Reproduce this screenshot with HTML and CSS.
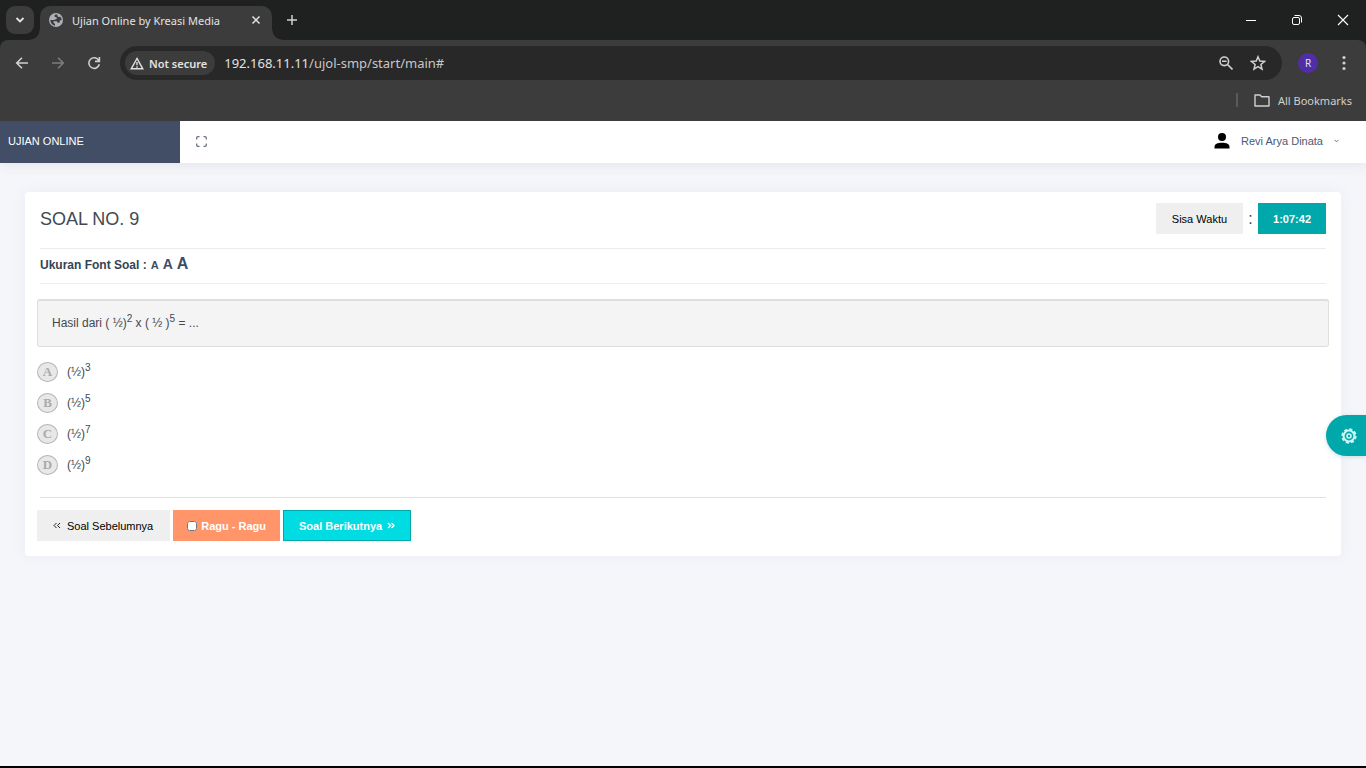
FILE: index.html
```html
<!DOCTYPE html>
<html lang="id">
<head>
<meta charset="utf-8">
<meta name="viewport" content="width=device-width, initial-scale=1">
<title>Ujian Online by Kreasi Media</title>
<link rel="stylesheet" href="styles.css">
</head>
<body>
<div class="browser">
  <div class="tabstrip">
    <button class="tab-search" aria-label="Search tabs"><svg width="10" height="8" viewBox="0 0 10 8"><path d="M1.500 2l3.500 3.500L8.500 2" fill="none" stroke="#e3e3e3" stroke-width="1.800"/></svg></button>
    <div class="tab">
      <svg width="14" height="14" viewBox="0 0 14 14"><circle cx="7" cy="7" r="7" fill="#aeb2b8"/><path d="M6.500 1.500c-1 .8-1.500 1.500-.7 2.300.9.700 2.200.2 2.100 1.500-.1 1.100-1.800.8-2.600 1.800H1.300c0 3 2 5.200 4.700 5.600V11l-1.500-1.400V8.300h3.200l1.100 1.400h1.600l.5-2c.5-.4 1.300-.5 1.800-.2 0-1.300-.5-2.700-1.400-3.700L9.500 4 8.400 2.900V1.500z" fill="#3c3c3c"/></svg>
      <span class="tab-title">Ujian Online by Kreasi Media</span>
      <button class="icon-button" aria-label="Close tab"><svg width="10" height="10" viewBox="0 0 10 10"><path d="M1.500 1.500l7 7m0-7l-7 7" stroke="#e3e3e3" stroke-width="1.500"/></svg></button>
    </div>
    <button class="icon-button new-tab" aria-label="New tab"><svg width="12" height="12" viewBox="0 0 12 12"><path d="M6 1v10M1 6h10" stroke="#d0d0d0" stroke-width="1.500"/></svg></button>
    <div class="window-controls">
      <button class="icon-button" aria-label="Minimize"><svg width="12" height="12" viewBox="0 0 12 12"><path d="M1 6.500h10" stroke="#fff"/></svg></button>
      <button class="icon-button" aria-label="Restore"><svg width="12" height="12" viewBox="0 0 12 12" fill="none" stroke="#fff"><rect x="1.500" y="3.500" width="7" height="7" rx="1.500"/><path d="M3.500 1.500H8A2.500 2.500 0 0 1 10.500 4v4.500"/></svg></button>
      <button class="icon-button" aria-label="Close"><svg width="12" height="12" viewBox="0 0 12 12"><path d="M1 1l10 10m0-10L1 11" stroke="#fff" stroke-width="1.100"/></svg></button>
    </div>
  </div>
  <div class="toolbar">
    <button class="icon-button" aria-label="Back"><svg width="14" height="14" viewBox="0 0 14 14" fill="none" stroke="#d0d0d0" stroke-width="1.600"><path d="M13 7H2m5-5.300L1.700 7 7 12.300"/></svg></button>
    <button class="icon-button" aria-label="Forward"><svg width="14" height="14" viewBox="0 0 14 14" fill="none" stroke="#7c7c7c" stroke-width="1.600"><path d="M1 7h11M7 1.700L12.300 7 7 12.300"/></svg></button>
    <button class="icon-button" aria-label="Reload"><svg width="14" height="14" viewBox="0 0 14 14" fill="none" stroke="#d0d0d0" stroke-width="1.600"><path d="M11.800 4.500A5.300 5.300 0 1 0 12.300 8.300M12.400 1v4.400H8"/></svg></button>
    <div class="omnibox">
      <button class="security"><svg width="14" height="13" viewBox="0 0 14 13" fill="none" stroke="#e0e0e0" stroke-width="1.400"><path d="M7 1.500L1.200 11.800h11.600zM7 5v3.300M7 9.300v1.400"/></svg>Not secure</button>
      <div class="url">192.168.11.11<span class="url-path">/ujol-smp/start/main#</span></div>
      <button class="icon-button" aria-label="Zoom"><svg width="14" height="14" viewBox="0 0 14 14" fill="none" stroke="#d0d0d0" stroke-width="1.600"><circle cx="5.300" cy="5.300" r="4.300"/><path d="M8.500 8.500l5 5M3 5.300h4.600"/></svg></button>
      <button class="icon-button" aria-label="Bookmark this page"><svg width="16" height="16" viewBox="0 0 16 16" fill="none" stroke="#d0d0d0" stroke-width="1.500"><path d="M8 1.800l1.800 4.300 4.700.4-3.600 3 1.100 4.600-4-2.500-4 2.500 1.100-4.600-3.600-3 4.700-.4z"/></svg></button>
    </div>
    <button class="profile" aria-label="Profile">R</button>
    <button class="icon-button" aria-label="Menu"><svg width="4" height="16" viewBox="0 0 4 16" fill="#d0d0d0"><circle cx="2" cy="2.500" r="1.600"/><circle cx="2" cy="8" r="1.600"/><circle cx="2" cy="13.500" r="1.600"/></svg></button>
  </div>
  <div class="bookmarks">
    <button class="all-bookmarks"><svg width="16" height="13" viewBox="0 0 16 13" fill="none" stroke="#d0d0d0" stroke-width="1.400"><path d="M1 1h5l1.700 1.800H15V12H1z" stroke-linejoin="round"/></svg>All Bookmarks</button>
  </div>
</div>

<div class="page">
  <header class="topbar">
    <a class="brand" href="#">UJIAN ONLINE</a>
    <button class="icon-button fullscreen" aria-label="Fullscreen"><svg width="11" height="11" viewBox="0 0 11 11" fill="none" stroke="#6b7283" stroke-width="1.300"><path d="M.7 3.500V2Q.7.700 2 .7h1.500M7.500.7H9q1.300 0 1.300 1.300v1.500M10.300 7.500V9q0 1.300-1.300 1.300H7.500M3.500 10.300H2Q.7 10.300.7 9V7.500"/></svg></button>
    <button class="user"><svg class="avatar" width="16" height="16" viewBox="0 0 16 16"><circle cx="8" cy="4" r="4"/><path d="M.5 15.500V14c0-3 3-4.300 7.500-4.300s7.500 1.300 7.500 4.300v1.500z"/></svg>Revi Arya Dinata<svg class="caret" width="5" height="4" viewBox="0 0 5 4"><path d="M.5.800l2 2 2-2" fill="none" stroke="#68718a"/></svg></button>
  </header>

  <main class="content">
    <section class="card">
      <div class="card-head">
        <h1 class="title">SOAL NO. 9</h1>
        <div class="timer"><span class="button muted">Sisa Waktu</span><span class="colon">:</span><span class="button time">1:07:42</span></div>
      </div>
      <div class="font-size">
        <span>Ukuran Font Soal :</span>
        <a class="small" href="#">A</a>
        <a class="medium" href="#">A</a>
        <a class="large" href="#">A</a>
      </div>
      <div class="question">Hasil dari ( ½)<sup>2</sup> x ( ½ )<sup>5</sup> = ...</div>
      <div class="options">
        <label class="option"><input type="radio" name="answer" value="A"><span class="letter">A</span><span>(½)<sup>3</sup></span></label>
        <label class="option"><input type="radio" name="answer" value="B"><span class="letter">B</span><span>(½)<sup>5</sup></span></label>
        <label class="option"><input type="radio" name="answer" value="C"><span class="letter">C</span><span>(½)<sup>7</sup></span></label>
        <label class="option"><input type="radio" name="answer" value="D"><span class="letter">D</span><span>(½)<sup>9</sup></span></label>
      </div>
      <div class="actions">
        <button class="button muted"><svg width="8" height="7" viewBox="0 0 8 7" fill="none" stroke="#222"><path d="M3.500 1L1 3.500 3.500 6M7 1L4.500 3.500 7 6"/></svg>Soal Sebelumnya</button>
        <label class="button doubt"><input type="checkbox">Ragu - Ragu</label>
        <button class="button next">Soal Berikutnya<svg width="8" height="7" viewBox="0 0 8 7" fill="none" stroke="#fff" stroke-width="1.400"><path d="M1 1l2.500 2.500L1 6M4.500 1L7 3.500 4.500 6"/></svg></button>
      </div>
    </section>
  </main>
  <button class="settings" aria-label="Settings"><svg width="16" height="16" viewBox="0 0 16 16" fill="none" stroke="#c9f5f5"><circle cx="8" cy="8" r="5.400" stroke-width="2"/><circle cx="8" cy="8" r="6.700" stroke-width="1.900" stroke-dasharray="3.200 2.060"/><circle cx="8" cy="8" r="2" stroke-width="1.600"/></svg></button>
</div>
</body>
</html>
```
FILE: styles.css
```css
* { box-sizing: border-box; }
html, body { height: 100%; }
body {
  margin: 0;
  display: flex;
  flex-direction: column;
  background: #f5f6fa;
  border-bottom: 2px solid #000;
  font-family: "Liberation Sans", Arial, sans-serif;
  font-size: 12px;
  color: #424950;
}
button { font: inherit; color: inherit; border: 0; padding: 0; background: none; }
a { color: inherit; text-decoration: none; }
svg { display: block; flex: none; }

.icon-button { display: flex; align-items: center; justify-content: center; width: 20px; height: 20px; flex: none; }

/* Browser window */
.browser { position: relative; z-index: 1; background: #1f2020; color: #e3e3e3; font-family: "Noto Sans", "Open Sans", sans-serif; font-size: 11px; }
.tabstrip { display: flex; align-items: center; height: 40px; padding-left: 6px; }
.tab-search { display: flex; align-items: center; justify-content: center; width: 28px; height: 28px; border-radius: 9px; background: #3c3c3c; }
.tab { position: relative; display: flex; align-items: center; gap: 9px; width: 232px; height: 34px; margin: 6px 0 0 6px; padding: 0 6px 6px 9px; border-radius: 10px 10px 0 0; background: #3c3c3c; }
.tab::before, .tab::after { content: ""; position: absolute; bottom: 0; width: 10px; height: 10px; }
.tab::before { right: 100%; background: radial-gradient(circle at 0 0, transparent 9px, #3c3c3c 10px); }
.tab::after { left: 100%; background: radial-gradient(circle at 100% 0, transparent 9px, #3c3c3c 10px); }
.tab-title { flex: 1; white-space: nowrap; }
.new-tab { margin-left: 10px; }
.window-controls { display: flex; gap: 26px; margin-left: auto; padding-right: 13px; }

.toolbar { display: flex; align-items: center; gap: 16px; height: 46px; padding: 0 12px; border-radius: 8px 8px 0 0; background: #3c3c3c; }
.omnibox { flex: 1; display: flex; align-items: center; gap: 12px; height: 34px; padding: 0 14px 0 5px; border-radius: 17px; background: #282828; }
.security { display: flex; align-items: center; gap: 5px; height: 24px; padding: 0 8px 0 5px; border-radius: 12px; background: #3c3c3c; font-weight: 600; }
.url { flex: 1; margin-left: -3px; font-size: 13px; }
.url-path { color: #c7c7c7; }
.profile { width: 20px; height: 20px; border-radius: 50%; background: #512da8; font-size: 10px; }
.bookmarks { display: flex; justify-content: flex-end; height: 35px; padding: 7px 14px 0 0; background: #3c3c3c; }
.all-bookmarks { display: flex; align-items: center; gap: 8px; height: 14px; padding-left: 16px; border-left: 2px solid #5a5a5a; color: #d0d0d0; }

/* Application */
.page { flex: 1; display: flex; flex-direction: column; }
.topbar { display: flex; align-items: center; height: 42px; padding-bottom: 2px; background: #fff; box-shadow: 0 1px 12px #dfe1e8; }
.brand { display: flex; align-items: center; align-self: flex-start; width: 180px; height: 42px; padding: 0 0 2px 8px; background: #414e66; color: #fff; font-size: 11px; }
.fullscreen { margin-left: 11px; }
.user { display: flex; align-items: center; margin-left: auto; padding-right: 27px; color: #4b5876; font-size: 11px; }
.avatar { margin-right: 11px; }
.caret { margin-left: 11px; }

.content { padding: 29px 25px; }
.card { padding: 11px 12px 15px; border-radius: 4px; background: #fff; box-shadow: 0 0 14px #e9ebf3; }
.card-head { display: flex; align-items: center; justify-content: space-between; margin: 0 3px; padding-bottom: 14px; border-bottom: 1px solid #ededed; }
.title { margin: 0; padding-top: 2px; font-size: 18px; font-weight: 400; }
.timer { display: flex; align-items: center; }
.colon { width: 15px; text-align: center; font-size: 16px; }
.button { display: flex; align-items: center; height: 31px; padding: 0 15px; font-size: 11px; white-space: nowrap; }
.muted { padding: 0 16px; background: #efefef; color: #000; }
.time { background: #00a8ab; color: #fff; font-weight: 700; }

.font-size { display: flex; align-items: baseline; gap: 4px; height: 35px; margin: 0 3px; padding-top: 6px; border-bottom: 1px solid #ededed; color: #354353; font-size: 12px; font-weight: 700; line-height: 18px; }
.font-size a { color: #3f4c68; }
.font-size .small { font-size: 11px; }
.font-size .medium { font-size: 14px; }
.font-size .large { font-size: 16px; }

sup { font-size: 10px; line-height: 0; }
.question { height: 48px; margin: 15px 0 9px; padding: 0 14px; border: 1px solid #dedede; border-top-width: 2px; border-radius: 3px; background: #f4f4f4; font-size: 12px; line-height: 45px; }
.options { padding-bottom: 17px; }
.option { display: flex; align-items: center; gap: 9px; height: 31px; }
.option input { position: absolute; opacity: 0; }
.letter { display: flex; align-items: center; justify-content: center; width: 21px; height: 20px; border: 1px solid #b5b5b5; border-radius: 50%; background: #e8e8e8; color: #aaa; font-family: "Liberation Serif", serif; font-size: 13px; font-weight: 700; }

.actions { display: flex; gap: 3px; padding-top: 13px; position: relative; }
.actions::before { content: ""; position: absolute; top: 0; left: 3px; right: 3px; height: 1px; background: #e0e0e0; }
.actions .muted { gap: 6px; padding-right: 17px; }
.doubt { gap: 4px; padding: 0 14px; background: #ff9568; color: #fff; font-weight: 700; }
.doubt input { width: 10px; height: 10px; margin: 0; }
.next { gap: 5px; padding: 0 15px; border: 1px solid #00a8ab; background: #00dce2; color: #fff; font-weight: 700; }

.settings { position: fixed; right: 0; top: 415px; display: flex; align-items: center; width: 40px; height: 41px; padding-left: 15px; border-radius: 21px 0 0 21px; background: #00a8ab; box-shadow: 0 1px 4px #c8dce2; }
```
